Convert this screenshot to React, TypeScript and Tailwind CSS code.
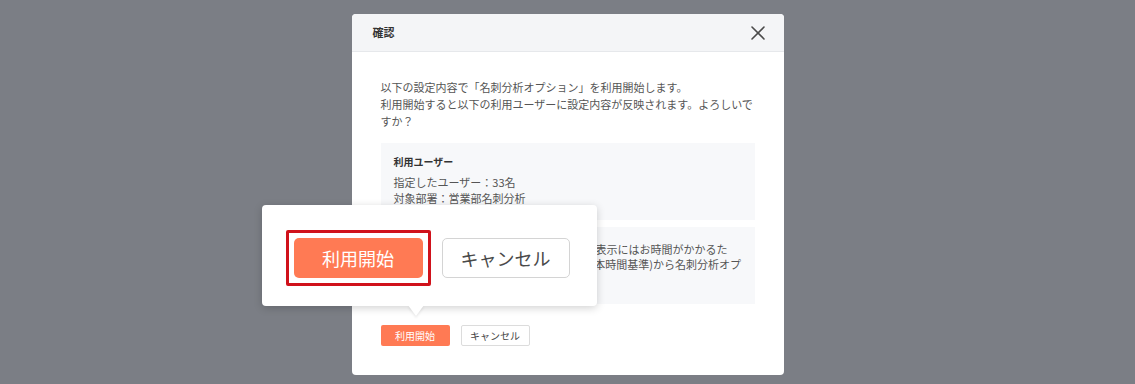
import { X } from 'lucide-react';

const font = { fontFamily: '"Noto Sans CJK JP", "Noto Sans", sans-serif' };

function ConfirmPopover() {
  return (
    <div className="absolute left-[-90px] top-[191px] h-[101px] w-[335px] rounded-[4px] bg-white shadow-[0_2px_8px_rgba(0,0,0,0.18)]">
      <div className="flex items-center pl-[24px] pt-[25px]">
        <div className="rounded-[2px] border-[3px] border-[#d0121b] p-[5px]">
          <button
            type="button"
            className="flex h-[40px] w-[129px] items-center justify-center rounded-[5px] bg-[#ff7a54] text-[18px] text-white"
          >
            利用開始
          </button>
        </div>
        <button
          type="button"
          className="ml-[11px] flex h-[40px] w-[128px] items-center justify-center rounded-[5px] border-[1.5px] border-[#d4d4d4] bg-white text-[18px] text-[#4a4a4a]"
        >
          キャンセル
        </button>
      </div>
      {/* arrow */}
      <div className="absolute left-[146px] top-[100px] h-0 w-0 border-x-[8px] border-t-[11px] border-x-transparent border-t-white drop-shadow-[0_2px_1px_rgba(0,0,0,0.08)]" />
    </div>
  );
}

export default function App() {
  return (
    <div className="flex h-[384px] w-full justify-center bg-[#7b7e85] pt-[14px]" style={font}>
      <div className="relative h-[361px] w-[432px] rounded-[4px] bg-white">
        <div className="flex h-[38px] items-center justify-between rounded-t-[4px] border-b border-[#e6e8eb] bg-[#f4f5f7] pl-[21px] pr-[14px]">
          <span className="text-[11px] font-bold text-[#333]">確認</span>
          <X className="h-[24px] w-[24px] text-[#4a4a4a]" strokeWidth={1.6} />
        </div>
        <div className="px-[29px] pt-[27px]">
          <p className="text-[11px] leading-[17px] text-[#555]">
            以下の設定内容で「名刺分析オプション」を利用開始します。
            <br />
            利用開始すると以下の利用ユーザーに設定内容が反映されます。よろしいですか？
          </p>
          <div className="mt-[13px] h-[77px] bg-[#f7f8fa] pl-[13px] pt-[11px]">
            <div className="text-[10px] font-bold leading-[16px] text-[#333]">利用ユーザー</div>
            <div className="mt-[4px] text-[11px] leading-[16px] text-[#555]">
              指定したユーザー：33名
              <br />
              対象部署：営業部名刺分析
            </div>
          </div>
          <div className="mt-[7px] h-[77px] bg-[#f7f8fa] pl-[6px] pr-[10px] pt-[15px]">
            <p className="text-[11px] leading-[15px] text-[#555]">
              ※利用開始後、名刺分析オプションの画面表示にはお時間がかかるため、データの反映は利用開始の翌日6時(日本時間基準)から名刺分析オプションをご利用いただけます。
            </p>
          </div>
          <div className="mt-[21px] flex gap-[11px]">
            <button
              type="button"
              className="flex h-[21px] w-[69px] items-center justify-center rounded-[2px] bg-[#ff7a54] text-[10px] text-white"
            >
              利用開始
            </button>
            <button
              type="button"
              className="flex h-[21px] w-[69px] items-center justify-center rounded-[2px] border border-[#dcdcdc] bg-white text-[10px] text-[#444]"
            >
              キャンセル
            </button>
          </div>
        </div>
        <ConfirmPopover />
      </div>
    </div>
  );
}
